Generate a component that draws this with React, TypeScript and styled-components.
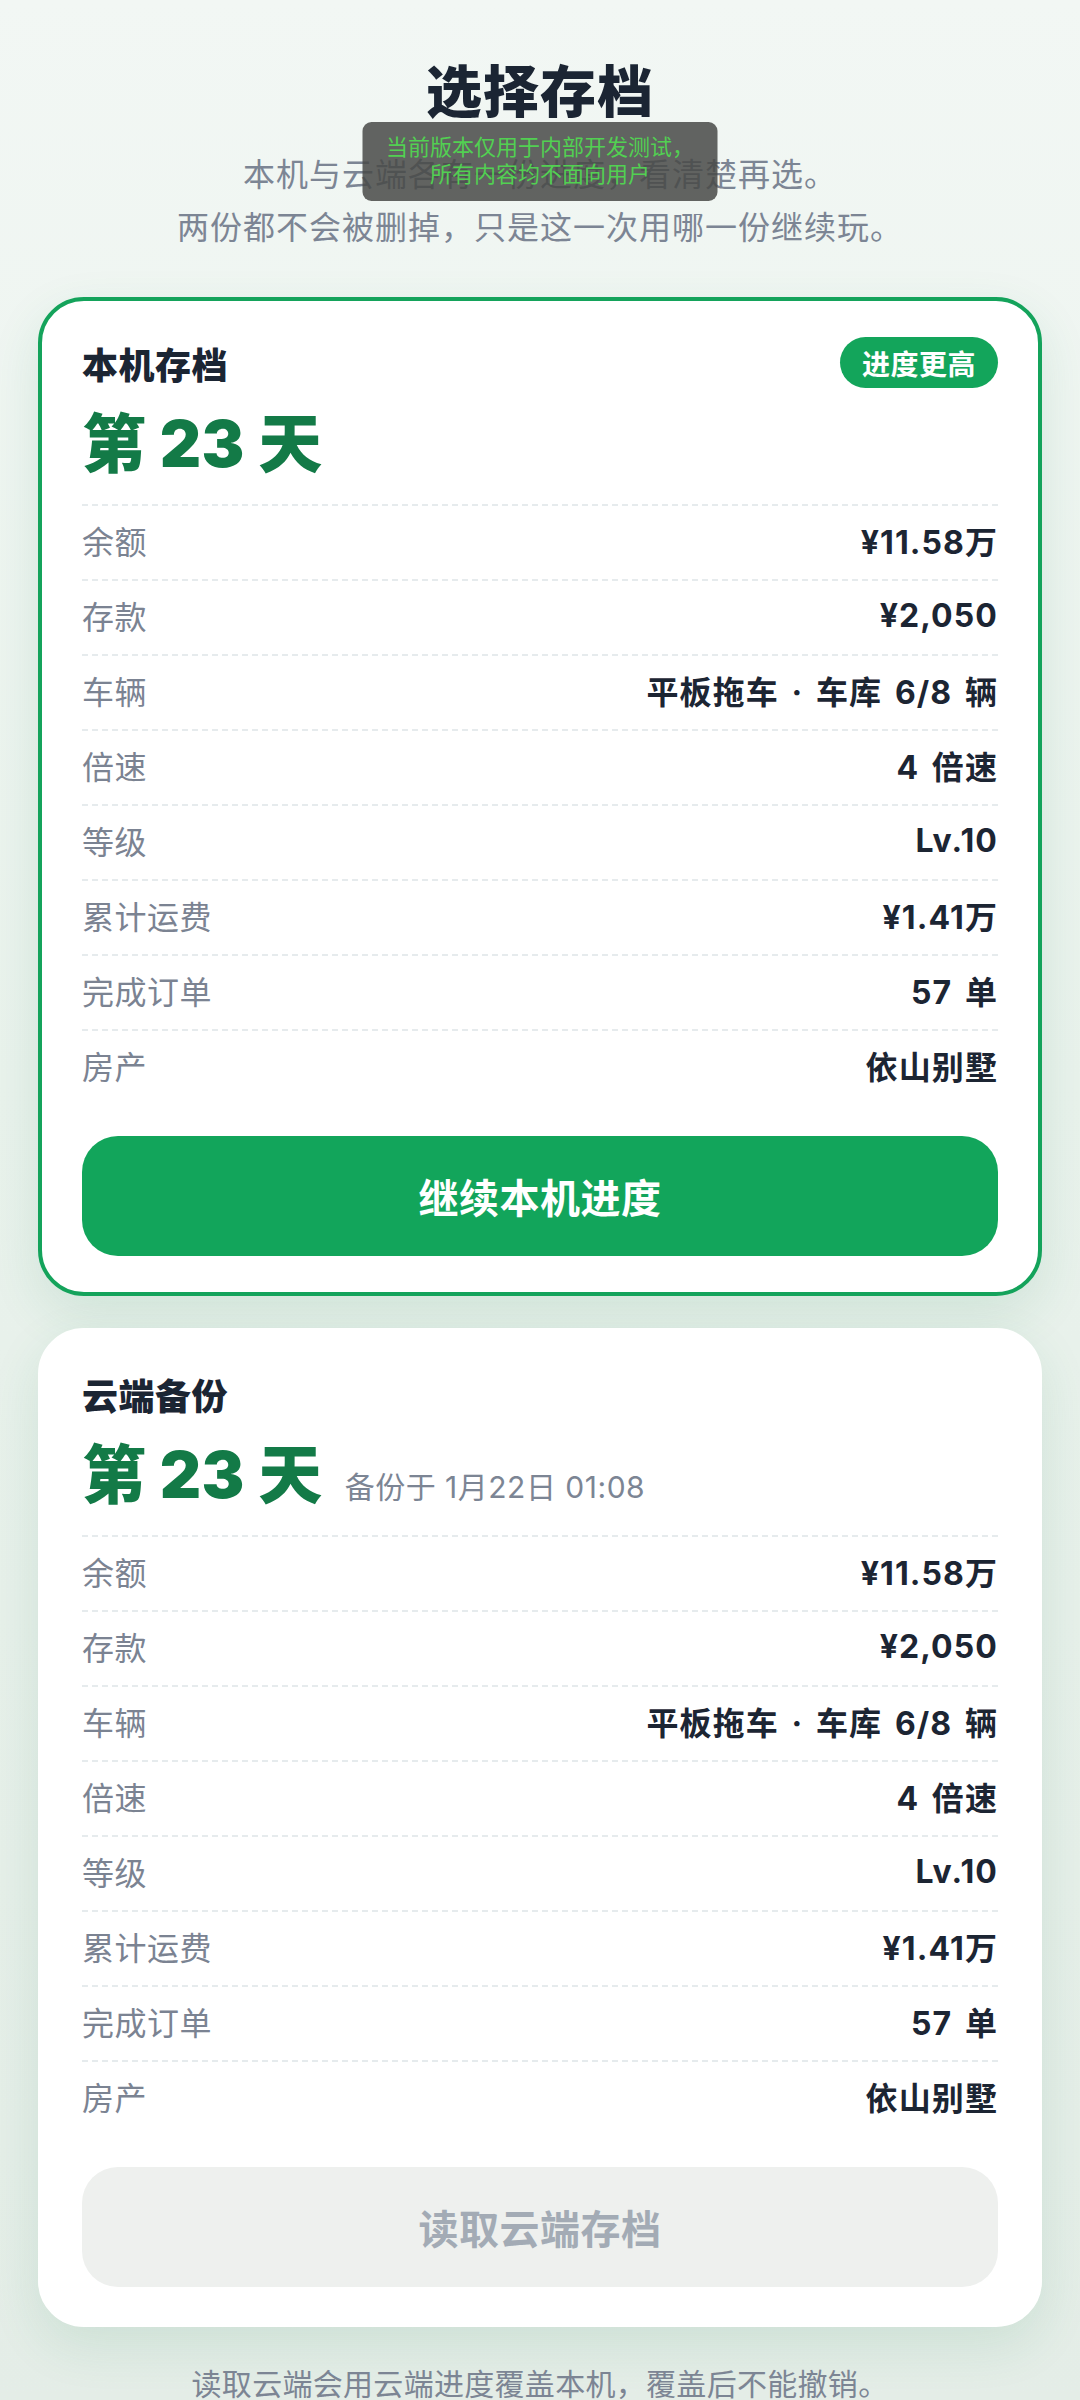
import styled, { createGlobalStyle } from "styled-components";

const GlobalStyle = createGlobalStyle`
  html, body {
    margin: 0;
    padding: 0;
  }
  body {
    font-family: Inter, "Noto Sans CJK SC", sans-serif;
    background: linear-gradient(180deg, #f2f7f4 0%, #e9f2ec 45%, #e4ede7 100%);
    min-height: 2400px;
  }
`;

type Stat = { label: string; value: string };

const stats: Stat[] = [
  { label: "余额", value: "¥11.58万" },
  { label: "存款", value: "¥2,050" },
  { label: "车辆", value: "平板拖车 · 车库 6/8 辆" },
  { label: "倍速", value: "4 倍速" },
  { label: "等级", value: "Lv.10" },
  { label: "累计运费", value: "¥1.41万" },
  { label: "完成订单", value: "57 单" },
  { label: "房产", value: "依山别墅" },
];

const SaveCard = ({
  title,
  badge,
  backupNote,
  action,
  highlighted,
}: {
  title: string;
  badge?: string;
  backupNote?: string;
  action: string;
  highlighted?: boolean;
}) => (
  <Card $highlighted={highlighted}>
    <CardHeader>
      <CardTitle>{title}</CardTitle>
      {badge && <Badge>{badge}</Badge>}
    </CardHeader>
    <DayLine>
      <DayText>第 23 天</DayText>
      {backupNote && <BackupNote>{backupNote}</BackupNote>}
    </DayLine>
    <StatList>
      {stats.map((s) => (
        <StatRow key={s.label}>
          <StatLabel>{s.label}</StatLabel>
          <StatValue>{s.value}</StatValue>
        </StatRow>
      ))}
    </StatList>
    <ActionButton $primary={highlighted}>{action}</ActionButton>
  </Card>
);

const App = () => {
  return (
    <>
      <GlobalStyle />
      <Page>
        <Title>选择存档</Title>
        <Subtitle>
          本机与云端各有一份进度，看清楚再选。
          <br />
          两份都不会被删掉，只是这一次用哪一份继续玩。
        </Subtitle>
        <CardStack>
          <SaveCard title="本机存档" badge="进度更高" action="继续本机进度" highlighted />
          <SaveCard title="云端备份" backupNote="备份于 1月22日 01:08" action="读取云端存档" />
        </CardStack>
        <FootNote>读取云端会用云端进度覆盖本机，覆盖后不能撤销。</FootNote>
        <Toast>
          当前版本仅用于内部开发测试，
          <br />
          所有内容均不面向用户
        </Toast>
      </Page>
    </>
  );
};

export default App;

const Page = styled.main`
  position: relative;
  display: flex;
  flex-direction: column;
  align-items: center;
  padding: 59px 38px 0;
  height: 2400px;
  box-sizing: border-box;
  overflow: hidden;
`;

const Title = styled.h1`
  margin: 0;
  font-size: 56px;
  line-height: 67px;
  font-weight: 900;
  color: #1b2533;
  letter-spacing: 1px;
`;

const Subtitle = styled.p`
  margin: 22px 0 0;
  font-size: 32px;
  line-height: 53px;
  letter-spacing: 1px;
  color: #7c8594;
  text-align: center;
`;

const CardStack = styled.div`
  width: 100%;
  display: flex;
  flex-direction: column;
  gap: 32px;
  margin-top: 43px;
`;

const Card = styled.section<{ $highlighted?: boolean }>`
  box-sizing: border-box;
  width: 100%;
  background: #ffffff;
  border: 4px solid ${(p) => (p.$highlighted ? "#14a35b" : "#ffffff")};
  border-radius: 46px;
  padding: 36px 40px 36px;
  box-shadow: 0 18px 50px rgba(30, 130, 80, 0.12);
`;

const CardHeader = styled.div`
  display: flex;
  align-items: center;
  justify-content: space-between;
  height: 51px;
`;

const CardTitle = styled.h2`
  margin: 0;
  font-size: 36px;
  font-weight: 800;
  letter-spacing: 0.5px;
  color: #1b2533;
`;

const Badge = styled.span`
  display: inline-flex;
  align-items: center;
  height: 51px;
  padding: 0 22px;
  border-radius: 26px;
  background: #13a55b;
  color: #ffffff;
  font-size: 28px;
  font-weight: 700;
  letter-spacing: 0.5px;
`;

const DayLine = styled.div`
  display: flex;
  align-items: baseline;
  margin-top: 17px;
  height: 77px;
  margin-bottom: 22px;
`;

const DayText = styled.span`
  font-size: 64px;
  line-height: 77px;
  font-weight: 900;
  color: #137a47;
  letter-spacing: 0.5px;
  white-space: pre;
`;

const BackupNote = styled.span`
  margin-left: 22px;
  font-size: 30px;
  letter-spacing: 0.5px;
  color: #7c8594;
`;

const StatList = styled.div`
  display: flex;
  flex-direction: column;
`;

const StatRow = styled.div`
  display: flex;
  align-items: center;
  justify-content: space-between;
  height: 75px;
  box-sizing: border-box;
  padding-bottom: 3px;
  background-image: repeating-linear-gradient(
    90deg,
    #e6ebed 0 6px,
    transparent 6px 10px
  );
  background-size: 100% 2px;
  background-repeat: no-repeat;
  background-position: top left;
`;

const StatLabel = styled.span`
  font-size: 32px;
  letter-spacing: 0.5px;
  color: #7b8392;
`;

const StatValue = styled.span`
  font-size: 32px;
  font-weight: 700;
  letter-spacing: 1.1px;
  word-spacing: 4px;
  color: #1c2533;
`;

const ActionButton = styled.button<{ $primary?: boolean }>`
  display: block;
  width: 100%;
  height: 120px;
  margin-top: 32px;
  border: none;
  border-radius: 36px;
  background: ${(p) => (p.$primary ? "#12a55b" : "#eef0ee")};
  color: ${(p) => (p.$primary ? "#ffffff" : "#a3abb5")};
  font-family: Inter, "Noto Sans CJK SC", sans-serif;
  font-size: 40px;
  font-weight: 700;
  letter-spacing: 0.5px;
`;

const FootNote = styled.p`
  margin: 36px 0 0;
  font-size: 30px;
  line-height: 42px;
  letter-spacing: 0.3px;
  color: #7c8594;
  text-align: center;
`;

const Toast = styled.div`
  position: absolute;
  top: 122px;
  left: 50%;
  transform: translateX(-50%);
  width: 355px;
  height: 79px;
  box-sizing: border-box;
  padding-top: 12px;
  border-radius: 9px;
  background: rgba(72, 73, 70, 0.85);
  color: #52d052;
  font-size: 22px;
  line-height: 27px;
  text-align: center;
`;
